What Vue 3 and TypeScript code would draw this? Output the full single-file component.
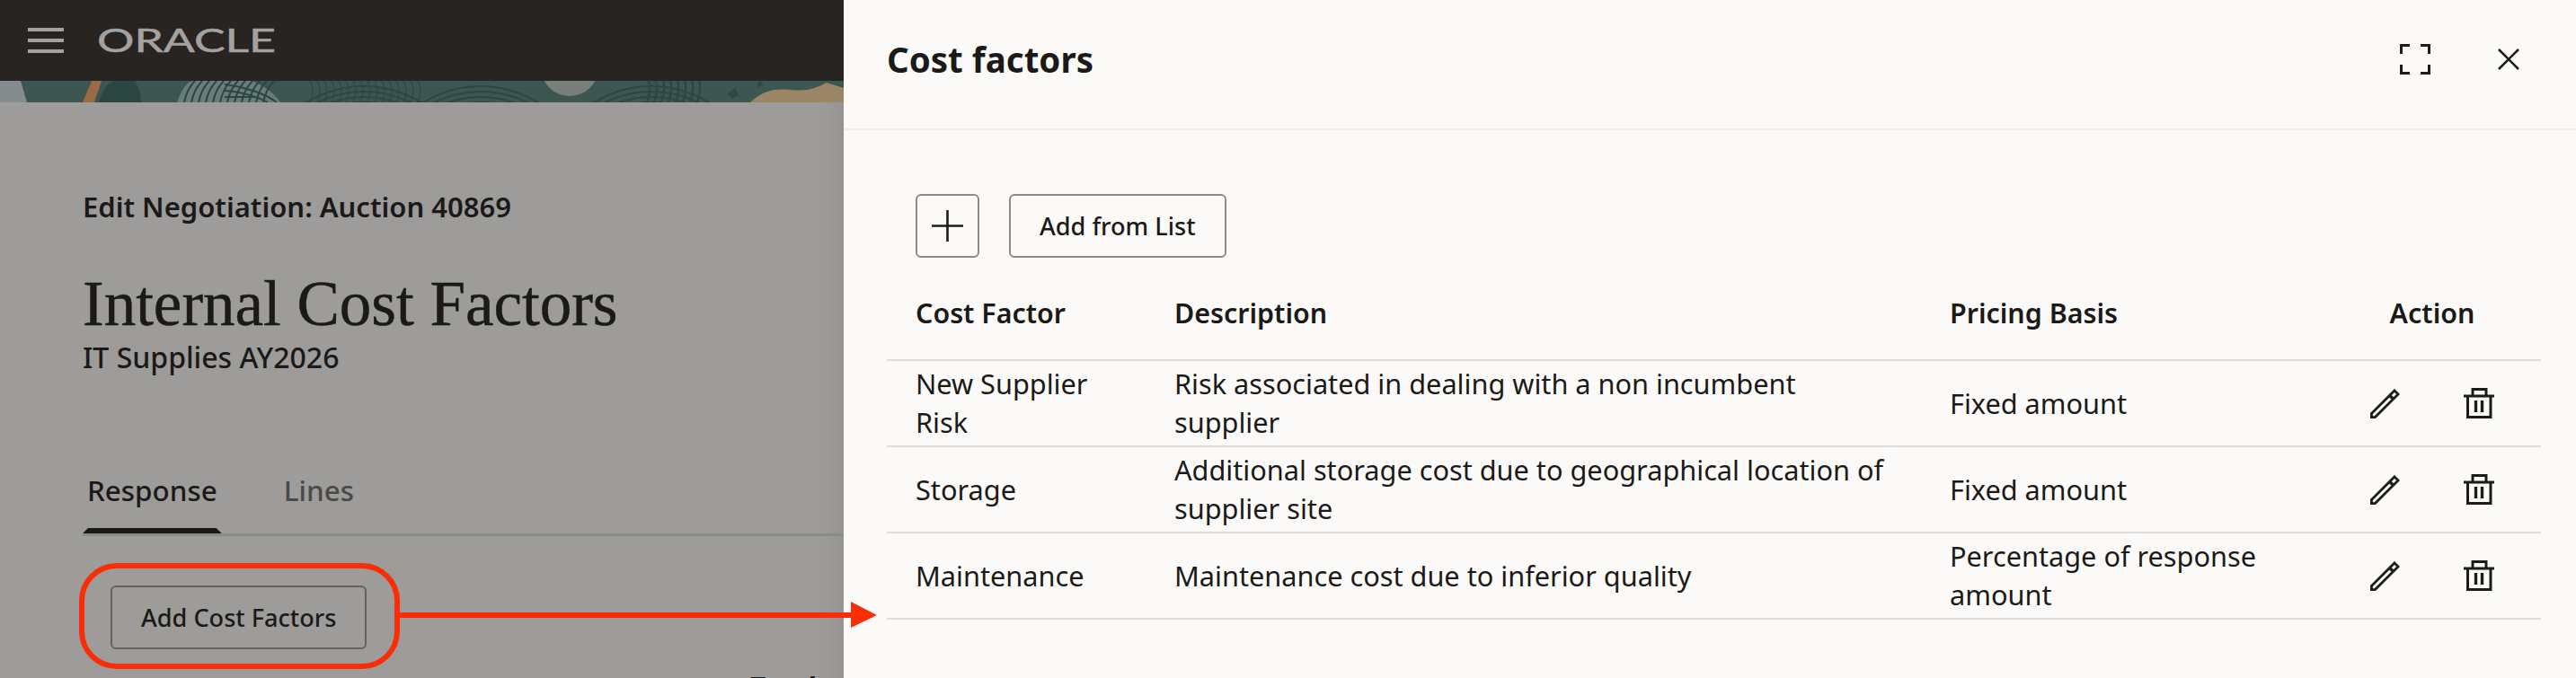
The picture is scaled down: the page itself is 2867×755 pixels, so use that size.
<script setup lang="ts">
interface Row { name: string; desc: string; basis: string }
const rows: Row[] = [
  { name: 'New Supplier Risk', desc: 'Risk associated in dealing with a non incumbent supplier', basis: 'Fixed amount' },
  { name: 'Storage', desc: 'Additional storage cost due to geographical location of supplier site', basis: 'Fixed amount' },
  { name: 'Maintenance', desc: 'Maintenance cost due to inferior quality', basis: 'Percentage of response amount' },
]
const prints = [405, 535, 725]
const radii = [104, 110, 116, 122]
const hatch = [205, 213, 221, 229, 237, 245, 253, 261, 269, 277, 285, 293]
const tails = [345, 353, 361, 369, 377, 385, 393, 401, 409, 417, 425, 433, 441, 449, 457, 465]
</script>

<template>
  <div class="screen">
    <section class="page">
      <header class="topbar">
        <svg class="burger" width="40" height="28" viewBox="0 0 40 28" aria-hidden="true">
          <rect y="0" width="40" height="4" />
          <rect y="12" width="40" height="4" />
          <rect y="24" width="40" height="4" />
        </svg>
        <svg class="brand" width="200" height="28" viewBox="0 0 200 28">
          <text x="0" y="26.5" textLength="199" lengthAdjust="spacingAndGlyphs">ORACLE</text>
        </svg>
      </header>

      <svg class="banner" width="939" height="24" viewBox="0 0 939 24" aria-hidden="true">
        <rect width="939" height="24" fill="#3d5650" />
        <path d="M0 0H23L30 24H0Z" fill="#858c8c" />
        <path d="M102 0H113L105 24H92Z" fill="#9a6947" />
        <path d="M110 24C114 10 120 0 130 0H150C155 8 157 16 157 24Z" fill="#2c4642" />
        <path d="M197 24C202 10 208 0 216 0H280C295 6 305 14 312 24Z" fill="#6b7d79" />
        <g fill="none" stroke="#2c4642" stroke-width="2">
          <path v-for="x in hatch" :key="x" :d="`M${x} 24C${x + 2} 14 ${x + 6} 6 ${x + 12} 0`" />
          <path d="M250 4C270 6 295 14 308 24M250 11C268 12 288 18 298 24M250 18H285" />
        </g>
        <circle cx="634" cy="-15" r="32" fill="#77807c" />
        <g fill="none" stroke="#2c4642" stroke-width="2">
          <g v-for="cx in prints" :key="cx">
            <circle v-for="r in radii" :key="r" :cx="cx" cy="128" :r="r" />
          </g>
          <path v-for="x in tails" :key="x" :d="`M${x} 0C${x + 4} 8 ${x + 4} 16 ${x} 24`" opacity=".55" />
          <path d="M720 24C724 12 724 6 722 0M728 24C732 12 732 6 730 0M736 24C740 12 740 6 738 0M744 24C748 12 748 6 746 0M752 24C756 12 756 6 754 0M760 24C764 12 764 6 762 0M768 24C772 12 772 6 770 0M776 24C780 12 780 6 778 0" />
        </g>
        <path d="M835 24C848 12 860 8 880 10C900 12 908 8 920 2L939 8V24Z" fill="#9a8565" />
        <path d="M810 14L818 8L822 16L814 20ZM845 0L850 4L842 8Z" fill="#2f4844" />
      </svg>

      <div class="content">
        <p class="crumb">Edit Negotiation: Auction 40869</p>
        <h1 class="title">Internal Cost Factors</h1>
        <p class="subtitle">IT Supplies AY2026</p>
        <nav class="tabs">
          <span class="tab tab-active">Response</span>
          <span class="tab">Lines</span>
        </nav>
        <button class="btn page-btn" type="button">Add Cost Factors</button>
        <p class="total">Total</p>
      </div>
    </section>

    <aside class="panel">
      <header class="panel-head">
        <h2>Cost factors</h2>
        <div class="panel-tools">
          <svg width="34" height="34" viewBox="0 0 34 34" fill="none" stroke="#1d1c1a" stroke-width="3" aria-hidden="true">
            <path d="M1.5 11V1.5H11M23 1.5H32.5V11M32.5 23V32.5H23M11 32.5H1.5V23" />
          </svg>
          <svg width="24" height="24" viewBox="0 0 24 24" fill="none" stroke="#1d1c1a" stroke-width="2.6" aria-hidden="true">
            <path d="M1 1L23 23M23 1L1 23" />
          </svg>
        </div>
      </header>

      <div class="panel-body">
        <div class="toolbar">
          <button class="btn icon-btn" type="button" aria-label="Add">
            <svg width="35" height="35" viewBox="0 0 35 35" stroke="#1d1c1a" stroke-width="2.6" aria-hidden="true">
              <path d="M17.5 0V35M0 17.5H35" />
            </svg>
          </button>
          <button class="btn" type="button">Add from List</button>
        </div>

        <div class="grid-row head-row">
          <span>Cost Factor</span>
          <span>Description</span>
          <span>Pricing Basis</span>
          <span class="action-head">Action</span>
        </div>

        <div v-for="row in rows" :key="row.name" class="grid-row data-row">
          <span class="c-name">{{ row.name }}</span>
          <span class="c-desc">{{ row.desc }}</span>
          <span class="c-basis">{{ row.basis }}</span>
          <span class="actions">
            <svg width="33" height="33" viewBox="0 0 33 33" fill="none" stroke="#1d1c1a" stroke-width="2.8" aria-hidden="true">
              <path d="M1.4 31.6V27.6L27 1.9L31.1 6L5.4 31.6Z" />
              <path d="M21.5 7.3L25.7 11.5" stroke-width="3.6" />
              <path d="M0 33V27.5L5.5 33Z" fill="#1d1c1a" stroke="none" />
            </svg>
            <svg width="34" height="34" viewBox="0 0 34 34" fill="none" stroke="#1d1c1a" stroke-width="3" aria-hidden="true">
              <path d="M0 9H34M10 9V1.5H25V9M4.5 9V32.5H30V9" />
              <path d="M13.5 14V27M20.5 14V27" stroke-width="3.4" />
            </svg>
          </span>
        </div>
      </div>
    </aside>

    <div class="callout"></div>
    <svg class="arrow" width="532" height="30" viewBox="0 0 532 30" aria-hidden="true">
      <path d="M0 12H503V0L532 15L503 29V18H0Z" fill="#fb2d06" />
    </svg>
  </div>
</template>

<style>
html, body { margin: 0; background: #9d9c9a; }
</style>

<style scoped>
.screen {
  position: relative;
  display: flex;
  width: 2867px;
  height: 755px;
  overflow: hidden;
  font-family: "Noto Sans", sans-serif;
  color: #1b1a18;
}
.page {
  display: flex;
  flex-direction: column;
  flex: 0 0 939px;
  min-height: 0;
  overflow: hidden;
  background: #9d9c9a;
}
.topbar {
  flex: none;
  display: flex;
  align-items: center;
  gap: 37px;
  height: 90px;
  padding-left: 31px;
  box-sizing: border-box;
  background: #272421;
}
.burger { fill: #a3a2a0; }
.brand { display: block; overflow: visible; }
.brand text {
  font-family: "Lato", sans-serif;
  font-size: 36px;
  font-weight: 400;
  stroke: #a3a2a0;
  stroke-width: .5px;
  fill: #a3a2a0;
}
.banner { display: block; flex: none; }
.content {
  flex: none;
  display: flex;
  flex-direction: column;
  align-items: flex-start;
  height: 641px;
  box-sizing: border-box;
  padding-top: 94px;
  background: linear-gradient(90deg, transparent 910px, rgba(0, 0, 0, .05));
}
.crumb {
  flex: none;
  margin: 0 0 0 92px;
  font-size: 31px;
  line-height: 44px;
  font-weight: 600;
}
.title {
  flex: none;
  margin: 48px 0 0 92px;
  font-family: "Liberation Serif", serif;
  font-size: 71px;
  line-height: 76px;
  font-weight: 400;
  -webkit-text-stroke: .5px #1b1a18;
}
.subtitle {
  flex: none;
  margin: 0 0 0 92px;
  font-size: 32px;
  line-height: 44px;
  font-weight: 500;
}
.tabs {
  flex: none;
  display: flex;
  align-self: stretch;
  margin: 104px 0 0 92px;
  gap: 64px;
  border-bottom: 3px solid #8a8a88;
}
.tab {
  position: relative;
  padding: 0 5px 26px;
  font-size: 31.4px;
  line-height: 44px;
  font-weight: 500;
  color: #4a4947;
}
.tab-active { color: #1b1a18; }
.tab-active::after {
  content: "";
  position: absolute;
  left: 0;
  right: 0;
  bottom: 0;
  height: 6px;
  background: #1b1a18;
  clip-path: polygon(6px 0, calc(100% - 6px) 0, 100% 100%, 0 100%);
}
.btn {
  flex: none;
  height: 71px;
  box-sizing: border-box;
  padding: 0 32px;
  border: 2px solid #8c8b89;
  border-radius: 6px;
  background: transparent;
  font-family: inherit;
  font-size: 27.1px;
  font-weight: 500;
  color: #1b1a18;
}
.page-btn {
  margin: 55px 0 0 123px;
  border-color: #636260;
}
.total {
  flex: none;
  margin: 20px 0 0 835px;
  font-size: 30px;
  line-height: 44px;
  font-weight: 700;
}
.panel {
  flex: 1;
  display: flex;
  flex-direction: column;
  background: #fbfaf8;
}
.panel-head {
  flex: none;
  display: flex;
  align-items: center;
  justify-content: space-between;
  height: 145px;
  box-sizing: border-box;
  padding: 0 64px 11px 48px;
  border-bottom: 2px solid #f1efed;
}
.panel-head h2 {
  margin: 0;
  font-size: 38.5px;
  font-weight: 700;
}
.panel-tools {
  display: flex;
  align-items: center;
  gap: 75px;
}
.panel-tools svg { display: block; }
.panel-body { padding: 71px 40px 0 48px; }
.toolbar {
  display: flex;
  gap: 33px;
  padding-left: 32px;
}
.icon-btn {
  display: flex;
  align-items: center;
  justify-content: center;
  width: 71px;
  padding: 0;
}
.grid-row {
  display: grid;
  grid-template-columns: 288px 863px 416px 242px;
  padding-left: 32px;
  font-size: 30.7px;
  line-height: 43px;
}
.head-row {
  height: 113px;
  box-sizing: border-box;
  padding-top: 9px;
  align-items: center;
  font-size: 30.4px;
  font-weight: 600;
}
.action-head { text-align: center; }
.data-row {
  height: 96px;
  box-sizing: border-box;
  align-items: center;
  border-top: 2px solid #dfdedc;
}
.data-row:last-child { height: 98px; border-bottom: 2px solid #dfdedc; }
.c-name { padding-right: 60px; }
.c-desc { padding-right: 68px; }
.c-basis { padding-right: 32px; }
.actions {
  display: flex;
  align-items: center;
  justify-content: center;
  gap: 71px;
}
.actions svg { display: block; }
.callout {
  position: absolute;
  left: 88px;
  top: 627px;
  width: 357px;
  height: 118px;
  box-sizing: border-box;
  border: 6px solid #fb2d06;
  border-radius: 42px;
}
.arrow {
  position: absolute;
  left: 444px;
  top: 670px;
}
</style>
